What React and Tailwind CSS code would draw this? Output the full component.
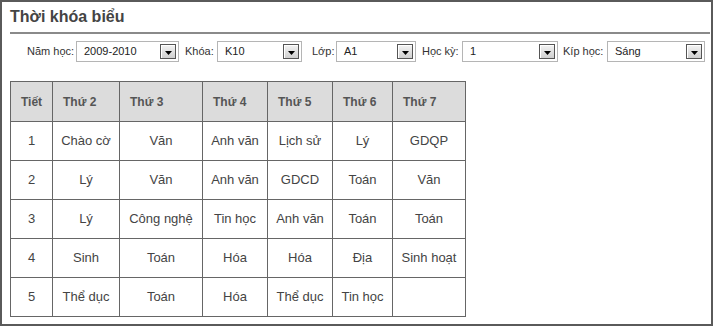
const FILTERS = [
  { label: "Năm học:", value: "2009-2010", lw: "w-[49px]", sw: "w-[103px]", ml: "ml-[25px]" },
  { label: "Khóa:", value: "K10", lw: "w-[32px]", sw: "w-[85px]", ml: "ml-[6px]" },
  { label: "Lớp:", value: "A1", lw: "w-[24px]", sw: "w-[80px]", ml: "ml-[10px]" },
  { label: "Học kỳ:", value: "1", lw: "w-[40px]", sw: "w-[96px]", ml: "ml-[6px]" },
  { label: "Kíp học:", value: "Sáng", lw: "w-[44px]", sw: "w-[98px]", ml: "ml-[5px]" },
];

const COLS = [
  { label: "Tiết", w: "w-[42px]", center: true },
  { label: "Thứ 2", w: "w-[67px]" },
  { label: "Thứ 3", w: "w-[83px]" },
  { label: "Thứ 4", w: "w-[65px]" },
  { label: "Thứ 5", w: "w-[65px]" },
  { label: "Thứ 6", w: "w-[60px]" },
  { label: "Thứ 7", w: "w-[73px]" },
];

const ROWS = [
  ["1", "Chào cờ", "Văn", "Anh văn", "Lịch sử", "Lý", "GDQP"],
  ["2", "Lý", "Văn", "Anh văn", "GDCD", "Toán", "Văn"],
  ["3", "Lý", "Công nghệ", "Tin học", "Anh văn", "Toán", "Toán"],
  ["4", "Sinh", "Toán", "Hóa", "Hóa", "Địa", "Sinh hoạt"],
  ["5", "Thể dục", "Toán", "Hóa", "Thể dục", "Tin học", ""],
];

const DropButton = () => (
  <span className="flex h-[15px] w-[16px] items-end justify-center border border-[#555] bg-gradient-to-b from-[#f4f4f4] to-[#cfcfcf] pb-[3px] shadow-[inset_1px_1px_0_#fff]">
    <svg width="7" height="4" viewBox="0 0 7 4">
      <path d="M0 0h7L3.5 4z" fill="#000" />
    </svg>
  </span>
);

const FakeSelect = ({ value, w }) => (
  <div className={`flex h-[21px] ${w} items-center justify-between border border-[#b5b5b5] bg-white pl-[7px] pr-[2px]`}>
    <span className="text-[11px] text-[#222]">{value}</span>
    <DropButton />
  </div>
);

export default function App() {
  return (
    <div
      className="h-[326px] w-[713px] border-2 border-[#5a5a5a] bg-white"
      style={{ fontFamily: '"Liberation Sans", Arial, sans-serif' }}
    >
      {/* Title */}
      <div className="ml-[8px] mr-[1px] border-b-2 border-[#8a8a8a] pt-[5px] pb-[6px]">
        <h1 className="text-[16px] font-bold leading-[19px] text-[#444]">Thời khóa biểu</h1>
      </div>

      {/* Filters */}
      <div className="mt-[7px] flex items-center">
        {FILTERS.map((f) => (
          <div key={f.label} className={`flex items-center ${f.ml}`}>
            <label className={`${f.lw} whitespace-nowrap text-[11px] text-[#333]`}>{f.label}</label>
            <FakeSelect value={f.value} w={f.sw} />
          </div>
        ))}
      </div>

      {/* Schedule */}
      <table className="ml-[8px] mt-[19px] border-collapse border border-[#666] text-[13px] text-[#444]">
        <thead>
          <tr className="h-[40px] bg-[#dcdcdc]">
            {COLS.map((c) => (
              <th
                key={c.label}
                className={`${c.w} border border-[#666] text-[12px] font-bold text-[#555] ${c.center ? "text-center" : "pl-[10px] text-left"}`}
              >
                {c.label}
              </th>
            ))}
          </tr>
        </thead>
        <tbody>
          {ROWS.map((row, i) => (
            <tr key={i} className="h-[39px]">
              {row.map((cell, j) => (
                <td key={j} className="border border-[#666] text-center">
                  {cell}
                </td>
              ))}
            </tr>
          ))}
        </tbody>
      </table>
    </div>
  );
}
